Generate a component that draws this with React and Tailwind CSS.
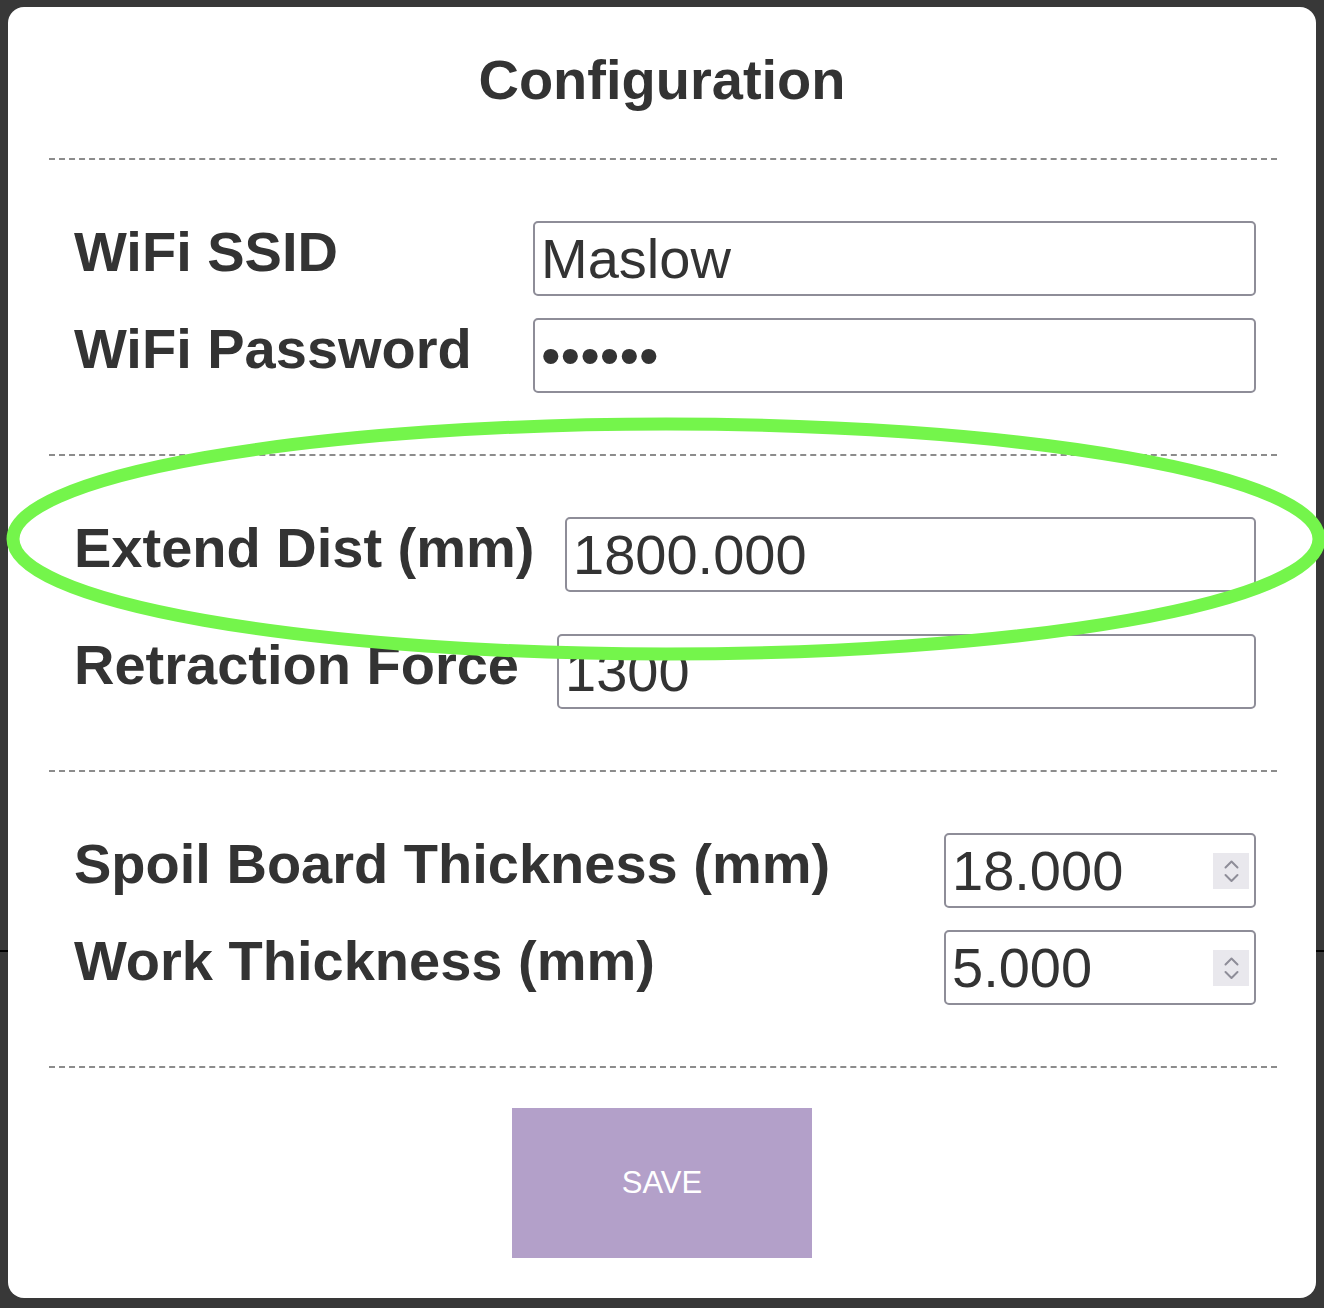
import React from 'react'

const Divider = () => (
  <div className="ml-[41px] mr-[39px] border-t-2 border-dashed border-[#8c8c8c]" />
)

const Field = ({ label, value, type = 'text', width }) => (
  <div className="flex items-start justify-between">
    <label className="text-[56px] leading-[64px] font-bold text-[#333] mt-[-1px] whitespace-nowrap">{label}</label>
    <input
      type={type}
      defaultValue={value}
      className={`h-[75px] ${width} border-2 border-[#8e8d98] rounded-[5px] px-[6px] text-[56px] text-[#333] bg-white outline-none`}
    />
  </div>
)

const NumberField = ({ label, value }) => (
  <div className="flex items-start justify-between">
    <label className="text-[56px] leading-[64px] font-bold text-[#333] mt-[-1px] whitespace-nowrap">{label}</label>
    <div className="flex items-center h-[75px] w-[312px] border-2 border-[#8e8d98] rounded-[5px] bg-white">
      <input
        type="text"
        defaultValue={value}
        className="flex-1 min-w-0 h-full px-[6px] text-[56px] text-[#333] bg-transparent outline-none"
      />
      {/* spinner */}
      <div className="w-[36px] h-[36px] mr-[5px] bg-[#e9e8ed]">
        <svg width="36" height="36" viewBox="0 0 36 36" fill="none" stroke="#8e8d98" strokeWidth="2" strokeLinecap="round" strokeLinejoin="round">
          <path d="M12.5 14.5 L18.5 8.5 L24.5 14.5" />
          <path d="M12.5 22 L18.5 28 L24.5 22" />
        </svg>
      </div>
    </div>
  </div>
)

export default function App() {
  return (
    <div className="relative w-[1324px] h-[1308px] bg-[#383838] pt-[7px] pl-[8px] font-[Liberation_Sans,Arial,Helvetica,sans-serif] overflow-hidden">
      {/* line of the page underneath */}
      <div className="absolute left-0 top-[950px] w-full h-[2px] bg-black" />

      <div className="relative w-[1308px] h-[1291px] rounded-[16px] bg-white pt-[41px]">
        <h1 className="text-[56px] leading-[64px] font-bold text-center text-[#333]">Configuration</h1>

        <div className="mt-[46px]">
          <Divider />
        </div>

        {/* WiFi */}
        <div className="pl-[66px] pr-[60px] pt-[61px] pb-[61px] flex flex-col gap-[22px]">
          <Field label="WiFi SSID" value="Maslow" width="w-[723px]" />
          <Field label="WiFi Password" value="aaaaaa" type="password" width="w-[723px]" />
        </div>

        <Divider />

        {/* Motion */}
        <div className="pl-[66px] pr-[60px] pt-[61px] pb-[61px] flex flex-col gap-[42px]">
          <Field label="Extend Dist (mm)" value="1800.000" width="w-[691px]" />
          <Field label="Retraction Force" value="1300" width="w-[699px]" />
        </div>

        <Divider />

        {/* Thickness */}
        <div className="pl-[66px] pr-[60px] pt-[61px] pb-[61px] flex flex-col gap-[22px]">
          <NumberField label="Spoil Board Thickness (mm)" value="18.000" />
          <NumberField label="Work Thickness (mm)" value="5.000" />
        </div>

        <Divider />

        <div className="flex justify-center mt-[40px]">
          <button className="w-[300px] h-[150px] bg-[#b3a0c9] text-white text-[31px]">SAVE</button>
        </div>
      </div>

      {/* annotation ellipse */}
      <svg className="absolute left-0 top-0 pointer-events-none" width="1324" height="1308" viewBox="0 0 1324 1308">
        <ellipse cx="666" cy="539" rx="653" ry="115" fill="none" stroke="#74f54b" strokeWidth="13" />
      </svg>
    </div>
  )
}
